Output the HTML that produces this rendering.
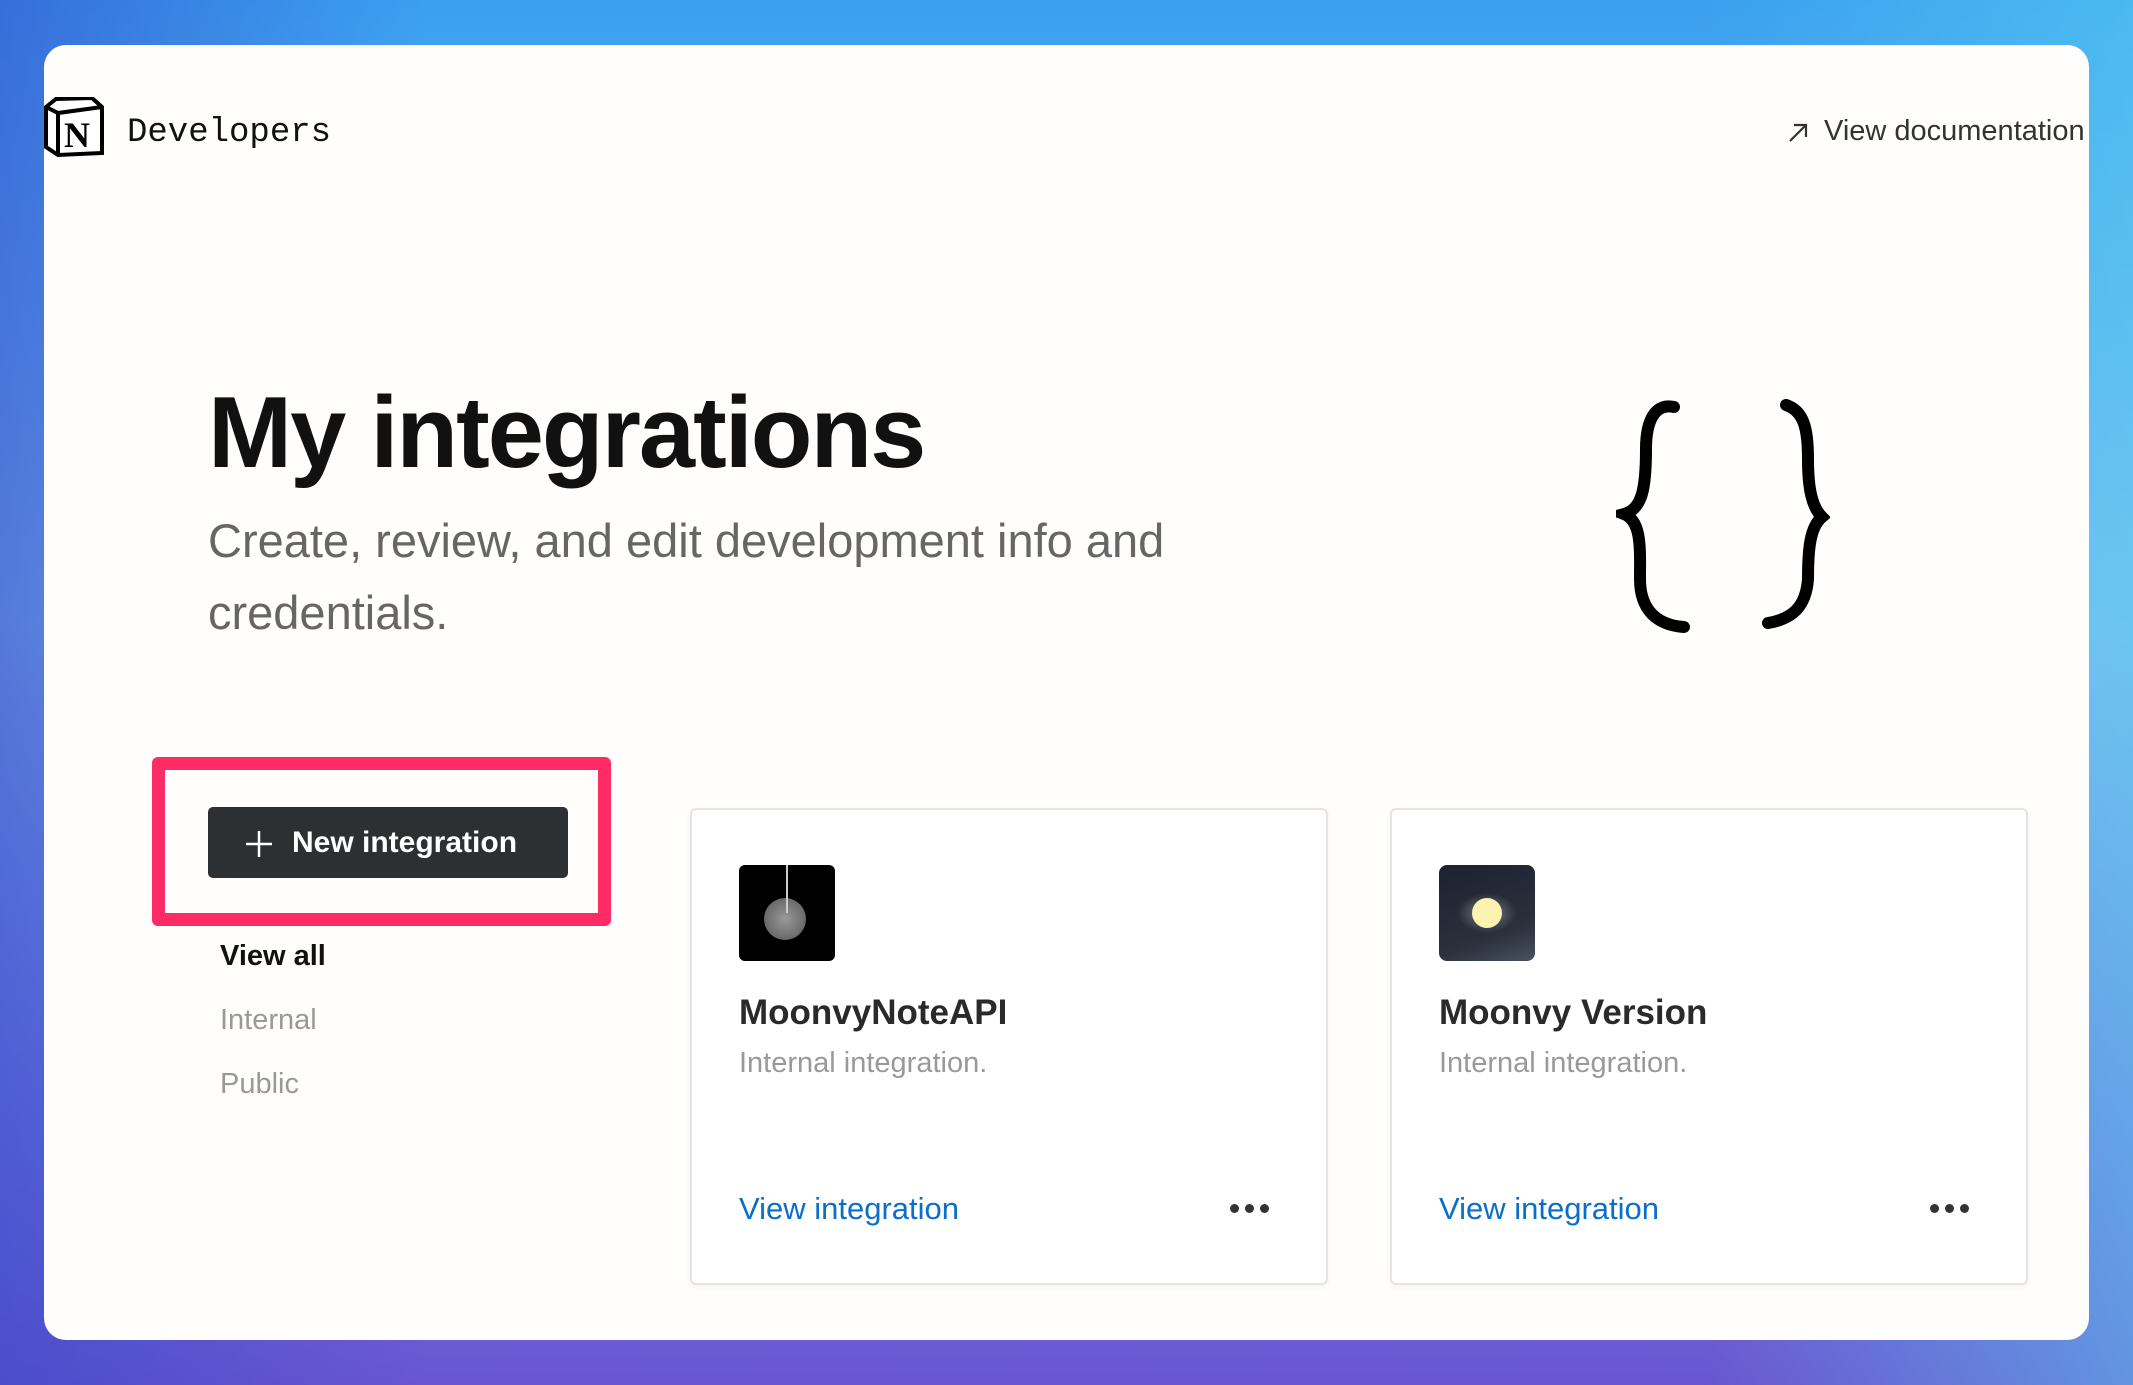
<!DOCTYPE html>
<html><head><meta charset="utf-8"><style>
*{margin:0;padding:0;box-sizing:border-box}
html,body{width:2133px;height:1385px;overflow:hidden}
body{background:linear-gradient(180deg,#3aa0f0 0%,#7fb8f0 45%,#6f78e0 80%,#6a55d0 100%);position:relative;font-family:"Liberation Sans",sans-serif}
.bgl{position:absolute;inset:0;background:linear-gradient(90deg,rgba(50,70,200,.55),rgba(0,0,0,0) 20%,rgba(0,0,0,0) 80%,rgba(90,210,240,.5))}
.panel{position:absolute;left:44px;top:45px;width:2045px;height:1295px;background:#fffefd;border-radius:22px;overflow:hidden}
.abs{position:absolute;white-space:nowrap}
.card{position:absolute;top:808px;width:638px;height:477px;border:2px solid #e6e5e3;border-radius:6px;background:#fff;box-shadow:0 2px 6px rgba(0,0,0,.05)}
.ct{font-size:35px;font-weight:bold;color:#2a2a2a;left:47px;top:183px}
.cs{font-size:29px;color:#999;left:47px;top:237px}
.cv{font-size:31px;color:#0b6ecb;left:47px;top:381px}
.dots{left:538px;top:394px;font-size:0}
.dots i{display:inline-block;width:9px;height:9px;border-radius:50%;background:#333;margin-right:6px}
</style></head><body><div class="bgl"></div>
<div class="panel">
<svg class="abs" style="left:0;top:52px" width="60" height="62" viewBox="0 0 60 62"><path d="M2 10 L12 2 L48 1 L58 10 L58 56 L14 58 L2 50 Z" fill="#fff" stroke="#000" stroke-width="4"/><path d="M2 10 L14 16 L58 10 M14 16 L14 58" stroke="#000" stroke-width="4" fill="none"/><text x="20" y="50" font-family="Liberation Serif" font-weight="bold" font-size="36">N</text></svg>
<div class="abs" style="left:83px;top:69px;font-family:'Liberation Mono',monospace;font-size:34px;color:#111">Developers</div>
<svg class="abs" style="left:1742px;top:76px" width="24" height="24" viewBox="0 0 24 24"><path d="M4 20 L20 4 M8 4 H20 V16" stroke="#333" stroke-width="2.2" fill="none"/></svg>
<div class="abs" style="left:1780px;top:70px;font-size:29px;color:#333">View documentation</div>
<div class="abs" style="left:164px;top:331px;font-size:101px;font-weight:bold;color:#111;letter-spacing:-2px">My integrations</div>
<div class="abs" style="left:164px;top:460px;font-size:47px;line-height:72px;color:#666">Create, review, and edit development info and<br>credentials.</div>
<svg class="abs" style="left:1572px;top:354px" width="214" height="236" viewBox="0 0 214 236"><path d="M58 8 C40 4 30 20 30 50 C30 90 26 110 8 115 C26 122 24 150 24 180 C24 210 40 226 68 228" stroke="#000" stroke-width="12" fill="none" stroke-linecap="round"/><path d="M170 6 C188 12 192 30 192 60 C192 90 196 108 206 118 C194 128 192 150 192 180 C190 208 176 220 152 224" stroke="#000" stroke-width="12" fill="none" stroke-linecap="round"/></svg>
<div class="abs" style="left:108px;top:712px;width:459px;height:169px;border:13px solid #fe2c64;border-radius:6px"></div>
<div class="abs" style="left:164px;top:762px;width:360px;height:71px;background:#2d3033;border-radius:5px"></div>
<svg class="abs" style="left:200px;top:784px" width="30" height="30" viewBox="0 0 30 30"><path d="M15 2 V28 M2 15 H28" stroke="#fff" stroke-width="2.5"/></svg>
<div class="abs" style="left:248px;top:781px;font-size:30px;font-weight:bold;color:#fff">New integration</div>
<div class="abs" style="left:176px;top:895px;font-size:29px;font-weight:bold;color:#111">View all</div>
<div class="abs" style="left:176px;top:959px;font-size:29px;color:#999">Internal</div>
<div class="abs" style="left:176px;top:1023px;font-size:29px;color:#999">Public</div>
</div>
<div class="card" style="left:690px">
<div class="abs" style="left:47px;top:55px;width:96px;height:96px;background:#000;border-radius:6px;overflow:hidden"><div style="position:absolute;left:25px;top:33px;width:42px;height:42px;border-radius:50%;background:radial-gradient(#999,#555)"></div><div style="position:absolute;left:47px;top:0;width:2px;height:48px;background:#ccc"></div></div>
<div class="abs ct">MoonvyNoteAPI</div><div class="abs cs">Internal integration.</div><div class="abs cv">View integration</div><div class="abs dots"><i></i><i></i><i></i></div></div>
<div class="card" style="left:1390px">
<div class="abs" style="left:47px;top:55px;width:96px;height:96px;background:linear-gradient(160deg,#1c2230,#2a303c 70%,#4a5260);border-radius:8px;overflow:hidden"><div style="position:absolute;left:18px;top:28px;width:60px;height:40px;background:radial-gradient(rgba(255,255,255,.4),transparent 70%)"></div><div style="position:absolute;left:33px;top:33px;width:30px;height:30px;border-radius:50%;background:#fdf3b0"></div></div>
<div class="abs ct">Moonvy Version</div><div class="abs cs">Internal integration.</div><div class="abs cv">View integration</div><div class="abs dots"><i></i><i></i><i></i></div></div>
</body></html>
